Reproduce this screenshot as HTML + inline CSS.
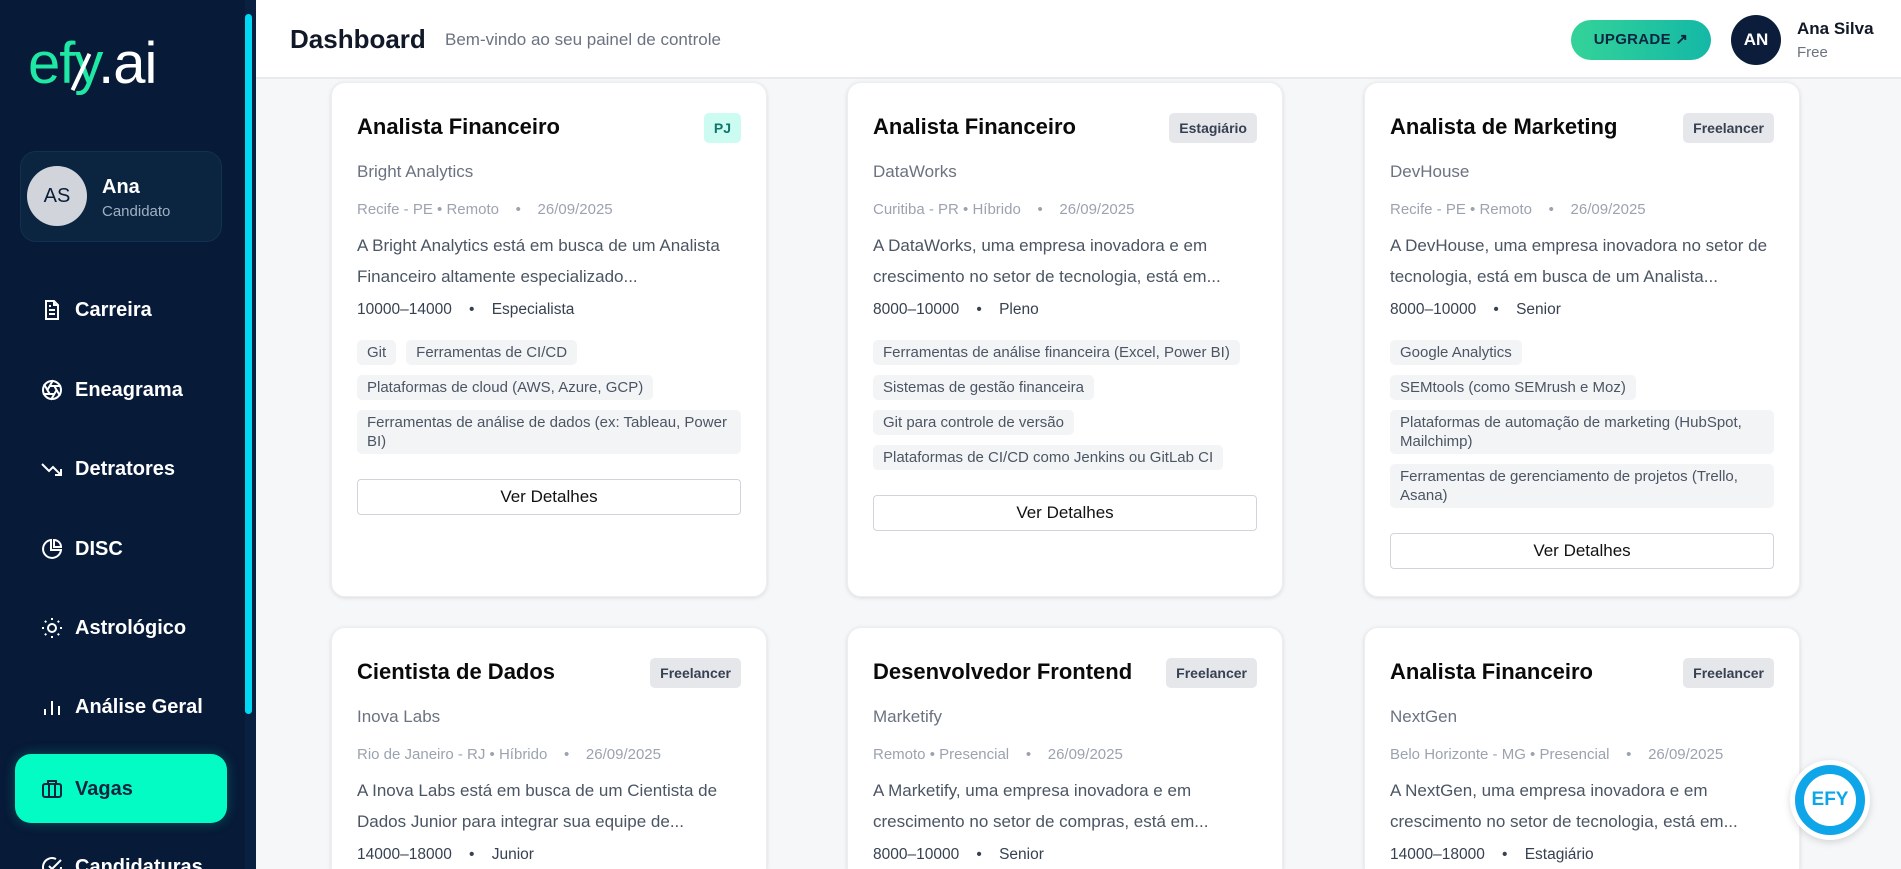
<!DOCTYPE html>
<html><head><meta charset="utf-8"><style>
*{box-sizing:border-box;margin:0;padding:0}
html,body{width:1901px;height:869px;overflow:hidden}
body{font-family:"Liberation Sans",sans-serif;background:#f6f7f9}
#w{position:relative;width:1901px;height:869px;overflow:hidden;background:#f6f7f9}
.side{position:absolute;left:0;top:0;width:256px;height:869px;background:#071a38;overflow:hidden}
.sb{position:absolute;left:245px;top:0;width:11px;height:869px;background:#0a2040}
.sb i{position:absolute;left:0;top:14px;width:7px;height:700px;background:#00d9f5;border-radius:4px}
.logo{position:absolute;left:28px;top:30px;font-size:58px;font-weight:400;letter-spacing:-1px;color:#fff}
.logo b{color:#1fe8a5;font-weight:400}
.slash{position:absolute;left:79px;top:52px;width:4px;height:40px;background:#fff;transform:rotate(25deg)}
.prof{position:absolute;left:20px;top:151px;width:202px;height:91px;border-radius:16px;background:#0b2540;border:1px solid #12304f}
.av{position:absolute;left:6px;top:14px;width:60px;height:60px;border-radius:50%;background:#d1d5db;color:#0b1d3a;font-size:20px;text-align:center;line-height:60px}
.pn{position:absolute;left:81px;top:24px;color:#fff;font-weight:700;font-size:20px}
.pr{position:absolute;left:81px;top:51px;color:#9fb0c4;font-size:15px}
.nav{position:absolute;left:40px;color:#fff;font-size:20px;font-weight:700;display:flex;align-items:center;gap:11px;height:30px}
.nav svg{width:24px;height:24px}
.act{position:absolute;left:15px;top:754px;width:212px;height:69px;border-radius:16px;background:#03fbc4;box-shadow:0 0 12px rgba(3,251,196,.25)}
.hdr{position:absolute;left:256px;top:0;right:0;height:79px;background:#fff;border-bottom:2px solid #e8eaee}
.h1{position:absolute;left:34px;top:24px;font-size:26px;font-weight:700;color:#111827}
.hs{position:absolute;left:189px;top:30px;font-size:17px;color:#6b7280}
.up{position:absolute;left:1315px;top:20px;width:140px;height:40px;border-radius:20px;background:linear-gradient(90deg,#34d399,#14b8a6);color:#0b2540;font-size:15px;font-weight:700;text-align:center;line-height:40px;letter-spacing:.3px}
.uav{position:absolute;left:1475px;top:15px;width:50px;height:50px;border-radius:50%;background:#0b1d3a;color:#fff;font-weight:700;font-size:17px;text-align:center;line-height:50px}
.un{position:absolute;left:1541px;top:19px;font-size:17px;font-weight:700;color:#111827}
.uf{position:absolute;left:1541px;top:44px;font-size:15px;color:#6b7280}
.card{position:absolute;width:436px;background:#fff;border-radius:14px;box-shadow:0 1px 4px rgba(0,0,0,.12);padding:29px 25px 0 25px;border:1px solid #eceef1;overflow:hidden}
.r2{top:627px;height:242px;border-bottom-left-radius:0;border-bottom-right-radius:0;border-bottom:none}
.t{font-size:22px;font-weight:700;color:#0a0a0a;line-height:30px}
.bd{position:absolute;right:25px;top:30px;height:30px;line-height:30px;padding:0 10px;border-radius:5px;background:#e5e7eb;color:#374151;font-size:14px;font-weight:700}
.pj{background:#ccfbf1;color:#0f766e}
.co{margin-top:18px;font-size:17px;line-height:24px;color:#6b7280}
.me{margin-top:16px;font-size:15px;line-height:20px;color:#9ca3af;white-space:nowrap}
.de{margin-top:10px;font-size:17px;line-height:31px;color:#4b5563}
.sa{margin-top:7px;font-size:15.5px;line-height:22px;color:#374151;white-space:nowrap}
.tg{margin-top:19px;display:flex;flex-wrap:wrap;gap:10px}
.tg span{background:#f3f4f6;border-radius:5px;padding:3px 10px;font-size:15px;line-height:19px;color:#4b5563}
.bt{margin-top:25px;height:36px;border:1px solid #d1d5db;border-radius:4px;text-align:center;line-height:34px;font-size:17px;color:#111}
.efy{position:absolute;left:1790px;top:760px;width:80px;height:80px;border-radius:50%;background:#fff;box-shadow:0 2px 8px rgba(0,0,0,.15)}
.efy div{position:absolute;left:5px;top:5px;width:70px;height:70px;border-radius:50%;border:9px solid #0ea5e9;color:#0ea5e9;font-weight:700;font-size:19px;text-align:center;line-height:52px}
</style></head><body><div id="w">
<div class="side">
<div class="logo"><b>efy</b>.ai</div><div class="slash"></div>
<div class="prof"><div class="av">AS</div><div class="pn">Ana</div><div class="pr">Candidato</div></div>
<div class="act"></div>
<div class="nav" style="top:295px"><svg viewBox="0 0 24 24" fill="none" stroke="#fff" stroke-width="2"><path d="M14 3H6v18h12V7z M14 3v4h4 M9 12h6 M9 16h6 M9 8h2"/></svg>Carreira</div>
<div class="nav" style="top:375px"><svg viewBox="0 0 24 24" fill="none" stroke="#fff" stroke-width="2"><circle cx="12" cy="12" r="9"/><path d="M14.3 8l5.7 9.9M9.7 8h11.4M7.4 12l5.7-9.9M9.7 16L4 6.1M14.3 16H2.9M16.6 12l-5.7 9.9"/></svg>Eneagrama</div>
<div class="nav" style="top:454px"><svg viewBox="0 0 24 24" fill="none" stroke="#fff" stroke-width="2"><path d="M2 7l7 7 4-4 8 8M15 18h6v-6"/></svg>Detratores</div>
<div class="nav" style="top:534px"><svg viewBox="0 0 24 24" fill="none" stroke="#fff" stroke-width="2"><path d="M21 13A9 9 0 1 1 11 3v10z M14 3a7 7 0 0 1 7 7h-7z"/></svg>DISC</div>
<div class="nav" style="top:613px"><svg viewBox="0 0 24 24" fill="none" stroke="#fff" stroke-width="2"><circle cx="12" cy="12" r="4"/><path d="M12 2v2M12 20v2M4.9 4.9l1.4 1.4M17.7 17.7l1.4 1.4M2 12h2M20 12h2M6.3 17.7l-1.4 1.4M19.1 4.9l-1.4 1.4"/></svg>Astrológico</div>
<div class="nav" style="top:692px"><svg viewBox="0 0 24 24" fill="none" stroke="#fff" stroke-width="2"><path d="M5 20v-6M12 20V6M19 20v-9"/></svg>Análise Geral</div>
<div class="nav" style="top:774px;color:#0b2540"><svg viewBox="0 0 24 24" fill="none" stroke="#0b2540" stroke-width="2"><rect x="3" y="7" width="18" height="13" rx="2"/><path d="M8 7V4h8v3M9 7v13M15 7v13"/></svg>Vagas</div>
<div class="nav" style="top:852px"><svg viewBox="0 0 24 24" fill="none" stroke="#fff" stroke-width="2"><path d="M21 12a9 9 0 1 1-5-8M9 11l3 3 9-9"/></svg>Candidaturas</div>
<div class="sb"><i></i></div>
</div>
<div class="hdr">
<div class="h1">Dashboard</div><div class="hs">Bem-vindo ao seu painel de controle</div>
<div class="up">UPGRADE &#8599;</div>
<div class="uav">AN</div><div class="un">Ana Silva</div><div class="uf">Free</div>
</div>

<div class="card" style="left:331px;top:82px;height:515px"><div class="t">Analista Financeiro</div><div class="bd pj">PJ</div>
<div class="co">Bright Analytics</div><div class="me">Recife - PE • Remoto &nbsp;&nbsp; • &nbsp;&nbsp; 26/09/2025</div>
<div class="de">A Bright Analytics está em busca de um Analista Financeiro altamente especializado...</div>
<div class="sa">10000–14000 &nbsp;&nbsp; • &nbsp;&nbsp; Especialista</div>
<div class="tg"><span>Git</span><span>Ferramentas de CI/CD</span><span>Plataformas de cloud (AWS, Azure, GCP)</span><span style="width:100%">Ferramentas de análise de dados (ex: Tableau, Power BI)</span></div>
<div class="bt">Ver Detalhes</div></div>

<div class="card" style="left:847px;top:82px;height:515px"><div class="t">Analista Financeiro</div><div class="bd">Estagiário</div>
<div class="co">DataWorks</div><div class="me">Curitiba - PR • Híbrido &nbsp;&nbsp; • &nbsp;&nbsp; 26/09/2025</div>
<div class="de">A DataWorks, uma empresa inovadora e em crescimento no setor de tecnologia, está em...</div>
<div class="sa">8000–10000 &nbsp;&nbsp; • &nbsp;&nbsp; Pleno</div>
<div class="tg"><span>Ferramentas de análise financeira (Excel, Power BI)</span><span>Sistemas de gestão financeira</span><span>Git para controle de versão</span><span>Plataformas de CI/CD como Jenkins ou GitLab CI</span></div>
<div class="bt">Ver Detalhes</div></div>

<div class="card" style="left:1364px;top:82px;height:515px"><div class="t">Analista de Marketing</div><div class="bd">Freelancer</div>
<div class="co">DevHouse</div><div class="me">Recife - PE • Remoto &nbsp;&nbsp; • &nbsp;&nbsp; 26/09/2025</div>
<div class="de">A DevHouse, uma empresa inovadora no setor de tecnologia, está em busca de um Analista...</div>
<div class="sa">8000–10000 &nbsp;&nbsp; • &nbsp;&nbsp; Senior</div>
<div class="tg"><span>Google Analytics</span><span>SEMtools (como SEMrush e Moz)</span><span style="width:100%">Plataformas de automação de marketing (HubSpot, Mailchimp)</span><span style="width:100%">Ferramentas de gerenciamento de projetos (Trello, Asana)</span></div>
<div class="bt">Ver Detalhes</div></div>

<div class="card r2" style="left:331px"><div class="t">Cientista de Dados</div><div class="bd">Freelancer</div>
<div class="co">Inova Labs</div><div class="me">Rio de Janeiro - RJ • Híbrido &nbsp;&nbsp; • &nbsp;&nbsp; 26/09/2025</div>
<div class="de">A Inova Labs está em busca de um Cientista de Dados Junior para integrar sua equipe de...</div>
<div class="sa">14000–18000 &nbsp;&nbsp; • &nbsp;&nbsp; Junior</div></div>

<div class="card r2" style="left:847px"><div class="t">Desenvolvedor Frontend</div><div class="bd">Freelancer</div>
<div class="co">Marketify</div><div class="me">Remoto • Presencial &nbsp;&nbsp; • &nbsp;&nbsp; 26/09/2025</div>
<div class="de">A Marketify, uma empresa inovadora e em crescimento no setor de compras, está em...</div>
<div class="sa">8000–10000 &nbsp;&nbsp; • &nbsp;&nbsp; Senior</div></div>

<div class="card r2" style="left:1364px"><div class="t">Analista Financeiro</div><div class="bd">Freelancer</div>
<div class="co">NextGen</div><div class="me">Belo Horizonte - MG • Presencial &nbsp;&nbsp; • &nbsp;&nbsp; 26/09/2025</div>
<div class="de">A NextGen, uma empresa inovadora e em crescimento no setor de tecnologia, está em...</div>
<div class="sa">14000–18000 &nbsp;&nbsp; • &nbsp;&nbsp; Estagiário</div></div>

<div class="efy"><div>EFY</div></div>
</div></body></html>
